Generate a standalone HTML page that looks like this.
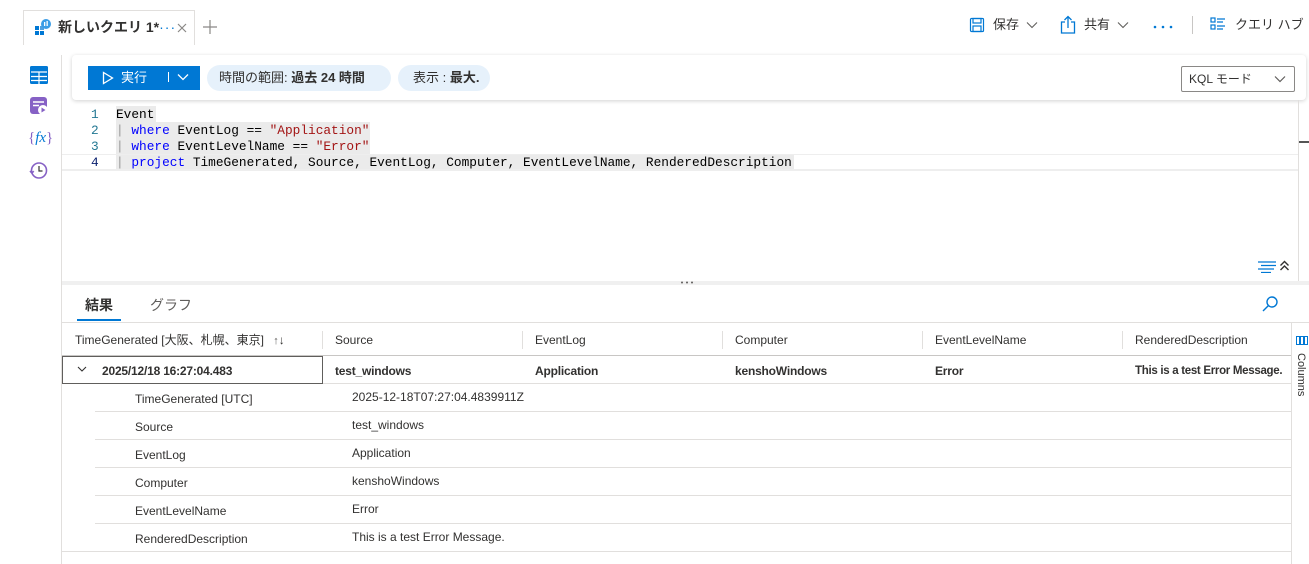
<!DOCTYPE html>
<html><head><meta charset="utf-8"><style>
*{margin:0;padding:0;box-sizing:border-box}
body{width:1309px;height:564px;overflow:hidden;background:#fff;font-family:"Liberation Sans","Noto Sans CJK JP",sans-serif;color:#323130;position:relative;font-size:12px}
.a{position:absolute;white-space:nowrap;line-height:16px}
.mono{font-family:"Liberation Mono","DejaVu Sans Mono",monospace;font-size:12.8px}
.kw{color:#0000ff}.st{color:#a31515}
</style></head><body>
<!-- tab bar -->
<div class="a" style="left:23px;top:10px;width:172px;height:35px;border:1px solid #e1dfdd;border-bottom:none;background:#fff"></div>
<svg class="a" style="left:34px;top:18px" width="18" height="18" viewBox="0 0 18 18"><rect x="1" y="8" width="4" height="4" fill="#0078d4"/><rect x="6" y="8" width="4" height="4" fill="#50a0e0"/><rect x="1" y="13" width="4" height="4" fill="#0078d4"/><rect x="6" y="13" width="4" height="4" fill="#0078d4"/><circle cx="12" cy="6" r="5" fill="#3b9de6"/><rect x="10" y="4" width="1.3" height="4" fill="#fff"/><rect x="12.5" y="3" width="1.3" height="5" fill="#fff"/></svg>
<div class="a" style="left:58px;top:19px;font-size:14px;font-weight:bold;color:#323130">新しいクエリ 1*<span style="color:#0078d4;font-weight:normal;letter-spacing:1px">···</span></div>
<svg class="a" style="left:177px;top:23px" width="10" height="10" viewBox="0 0 10 10" stroke="#8a8886" stroke-width="1.2"><path d="M1 1l8 8M9 1l-8 8"/></svg>
<svg class="a" style="left:203px;top:20px" width="14" height="14" viewBox="0 0 14 14" stroke="#8a8886" stroke-width="1.2"><path d="M7 0v14M0 7h14"/></svg>
<svg class="a" style="left:969px;top:17px" width="16" height="16" viewBox="0 0 16 16" fill="none" stroke="#0078d4" stroke-width="1.2"><rect x="1.5" y="1.5" width="13" height="13" rx="1"/><rect x="4" y="1.5" width="8" height="4.5"/><rect x="4" y="9" width="8" height="5.5"/></svg>
<div class="a" style="left:993px;top:17px;font-size:13px">保存</div>
<svg class="a" style="left:1026px;top:21px" width="12" height="8" viewBox="0 0 12 8" fill="none" stroke="#605e5c" stroke-width="1.1"><path d="M1 1.5l5 5 5-5"/></svg>
<svg class="a" style="left:1060px;top:15px" width="16" height="19" viewBox="0 0 16 19" fill="none" stroke="#0078d4" stroke-width="1.3"><path d="M5 7H1.5v11h13V7H11"/><path d="M8 13V1.5M4.5 5L8 1.5 11.5 5"/></svg>
<div class="a" style="left:1084px;top:17px;font-size:13px">共有</div>
<svg class="a" style="left:1117px;top:21px" width="12" height="8" viewBox="0 0 12 8" fill="none" stroke="#605e5c" stroke-width="1.1"><path d="M1 1.5l5 5 5-5"/></svg>
<svg class="a" style="left:1153px;top:25px" width="20" height="4" viewBox="0 0 20 4" fill="#0078d4"><circle cx="2" cy="2" r="1.3"/><circle cx="10" cy="2" r="1.3"/><circle cx="18" cy="2" r="1.3"/></svg>
<div class="a" style="left:1192px;top:16px;width:1px;height:18px;background:#c8c6c4"></div>
<svg class="a" style="left:1210px;top:17px" width="16" height="14" viewBox="0 0 16 14" fill="none" stroke="#0078d4" stroke-width="1.2"><rect x="1" y="1" width="4" height="4"/><rect x="1" y="8" width="4" height="4"/><path d="M7 2h8M7 5h6M7 9h8M7 12h6"/></svg>
<div class="a" style="left:1235px;top:17px;font-size:13px">クエリ ハブ</div>
<!-- left sidebar -->
<div class="a" style="left:61px;top:55px;width:1px;height:509px;background:#e1dfdd"></div>
<svg class="a" style="left:30px;top:66px" width="18" height="18" viewBox="0 0 18 18"><rect x="0" y="0" width="18" height="18" rx="1.5" fill="#0078d4"/><path d="M1 6h16M1 10.5h16M1 14.5h16M9 6v12" stroke="#fff" stroke-width="1.2"/></svg>
<svg class="a" style="left:30px;top:97px" width="18" height="19" viewBox="0 0 18 19"><rect x="0" y="0" width="17" height="17" rx="3" fill="#8661c5"/><path d="M3 5h11M3 8.5h6" stroke="#fff" stroke-width="1.5"/><circle cx="13" cy="13" r="5" fill="#fff"/><path d="M11.5 10.5v5l4-2.5z" fill="#8661c5"/></svg>
<div class="a" style="left:28px;top:130px;font-size:15px;color:#0078d4;font-family:'Liberation Serif',serif"><span style="color:#8661c5">{</span><i>fx</i><span style="color:#8661c5">}</span></div>
<svg class="a" style="left:29px;top:161px" width="20" height="19" viewBox="0 0 20 19" fill="none" stroke="#8661c5" stroke-width="1.6"><circle cx="10" cy="9.5" r="7.5"/><path d="M10 5v5h3.5" stroke="#333" stroke-width="1.2"/><path d="M1 10l1.8 2 2-1.8"/></svg>
<!-- toolbar card -->
<div class="a" style="left:72px;top:55px;width:1234px;height:45px;background:#fff;border-radius:4px;box-shadow:0 1px 4px rgba(0,0,0,.18)"></div>
<div class="a" style="left:88px;top:66px;width:112px;height:24px;background:#0078d4"></div>
<svg class="a" style="left:102px;top:71px" width="12" height="14" viewBox="0 0 12 14" fill="none" stroke="#fff" stroke-width="1.3"><path d="M1.5 1.5v11l9-5.5z"/></svg>
<div class="a" style="left:121px;top:70px;color:#fff;font-size:13px">実行</div>
<div class="a" style="left:168px;top:72px;width:1px;height:10px;background:#fff"></div>
<svg class="a" style="left:177px;top:73px" width="12" height="8" viewBox="0 0 12 8" fill="none" stroke="#fff" stroke-width="1.3"><path d="M1 1.5l5 5 5-5"/></svg>
<div class="a" style="left:207px;top:65px;width:184px;height:26px;border-radius:13px;background:#e6f1fb"></div>
<div class="a" style="left:219px;top:70px;font-size:13px">時間の範囲: <b>過去 24 時間</b></div>
<div class="a" style="left:398px;top:65px;width:92px;height:26px;border-radius:13px;background:#e6f1fb"></div>
<div class="a" style="left:413px;top:70px;font-size:13px">表示 : <b>最大.</b></div>
<div class="a" style="left:1181px;top:66px;width:114px;height:26px;border:1px solid #8a8886;border-radius:2px"></div>
<div class="a" style="left:1189px;top:71px;font-size:12px">KQL モード</div>
<svg class="a" style="left:1274px;top:75px" width="12" height="8" viewBox="0 0 12 8" fill="none" stroke="#605e5c" stroke-width="1.2"><path d="M1 1.5l5 5 5-5"/></svg>
<!-- editor -->
<div class="a" style="left:116px;top:106px;width:40px;height:16px;background:#ebebeb"></div>
<div class="a" style="left:116px;top:122px;width:254px;height:16px;background:#ebebeb"></div>
<div class="a" style="left:116px;top:138px;width:254px;height:16px;background:#ebebeb"></div>
<div class="a" style="left:116px;top:154px;width:678px;height:16px;background:#ebebeb"></div>
<div class="a" style="left:62px;top:154px;width:1236px;height:17px;border-top:1px solid #eee;border-bottom:2px solid #eee"></div>
<div class="a mono" style="left:91px;top:107px;line-height:16px;color:#237893">1<br>2<br>3<br><span style="color:#0b216f">4</span></div>
<div class="a mono" style="left:116px;top:107px;line-height:16px;color:#000">Event<br><span style="color:#999">|</span> <span class="kw">where</span> EventLog == <span class="st">"Application"</span><br><span style="color:#999">|</span> <span class="kw">where</span> EventLevelName == <span class="st">"Error"</span><br><span style="color:#999">|</span> <span class="kw">project</span> TimeGenerated, Source, EventLog, Computer, EventLevelName, RenderedDescription</div>
<div class="a" style="left:1298px;top:100px;width:1px;height:181px;background:#e1dfdd"></div>
<div class="a" style="left:1299px;top:141px;width:10px;height:2px;background:#555"></div>
<svg class="a" style="left:1258px;top:261px" width="18" height="12" viewBox="0 0 18 12" stroke="#0078d4" stroke-width="1.2"><path d="M0 1h18M3 4.5h15M0 8h16M3 11.5h10"/></svg>
<svg class="a" style="left:1279px;top:260px" width="11" height="11" viewBox="0 0 11 11" fill="none" stroke="#323130" stroke-width="1.4"><path d="M1.5 5.5l4-4 4 4M1.5 10l4-4 4 4"/></svg>
<!-- splitter -->
<div class="a" style="left:62px;top:281px;width:1247px;height:4px;background:#f0f0f0"></div>
<svg class="a" style="left:680px;top:281px" width="14" height="3" viewBox="0 0 14 3" fill="#605e5c"><circle cx="2" cy="1.5" r="1"/><circle cx="7" cy="1.5" r="1"/><circle cx="12" cy="1.5" r="1"/></svg>
<!-- results tabs -->
<div class="a" style="left:85px;top:297px;font-size:14px;font-weight:bold">結果</div>
<div class="a" style="left:150px;top:297px;font-size:14px;color:#605e5c">グラフ</div>
<div class="a" style="left:77px;top:319px;width:44px;height:2px;background:#0078d4"></div>
<div class="a" style="left:62px;top:322px;width:1247px;height:1px;background:#e1dfdd"></div>
<svg class="a" style="left:1261px;top:295px" width="18" height="18" viewBox="0 0 18 18" fill="none" stroke="#0078d4" stroke-width="1.4"><circle cx="11" cy="7" r="5"/><path d="M7.5 10.5L2 16"/></svg>
<!-- header -->
<div class="a" style="left:75px;top:332px;font-size:12px">TimeGenerated [大阪、札幌、東京] <span style="color:#605e5c;font-size:11px;margin-left:6px">↑</span>↓</div>
<div class="a" style="left:322px;top:331px;width:1px;height:18px;background:#e1dfdd"></div>
<div class="a" style="left:522px;top:331px;width:1px;height:18px;background:#e1dfdd"></div>
<div class="a" style="left:722px;top:331px;width:1px;height:18px;background:#e1dfdd"></div>
<div class="a" style="left:922px;top:331px;width:1px;height:18px;background:#e1dfdd"></div>
<div class="a" style="left:1122px;top:331px;width:1px;height:18px;background:#e1dfdd"></div>
<div class="a" style="left:335px;top:332px">Source</div>
<div class="a" style="left:535px;top:332px">EventLog</div>
<div class="a" style="left:735px;top:332px">Computer</div>
<div class="a" style="left:935px;top:332px">EventLevelName</div>
<div class="a" style="left:1135px;top:332px">RenderedDescription</div>
<div class="a" style="left:62px;top:355px;width:1229px;height:1px;background:#c8c6c4"></div>
<!-- columns side -->
<div class="a" style="left:1291px;top:323px;width:1px;height:241px;background:#e1dfdd"></div>
<svg class="a" style="left:1296px;top:336px" width="12" height="9" viewBox="0 0 12 9" fill="none" stroke="#0078d4" stroke-width="1"><rect x=".5" y=".5" width="3" height="8"/><rect x="4.5" y=".5" width="3" height="8"/><rect x="8.5" y=".5" width="3" height="8"/></svg>
<div class="a" style="left:1293px;top:353px;font-size:11px;writing-mode:vertical-rl">Columns</div>
<!-- data row -->
<div class="a" style="left:62px;top:356px;width:261px;height:28px;border:1px solid #605e5c"></div>
<svg class="a" style="left:77px;top:366px" width="10" height="7" viewBox="0 0 10 7" fill="none" stroke="#323130" stroke-width="1.1"><path d="M1 1l4 4 4-4"/></svg>
<div class="a" style="left:102px;top:363px;font-weight:bold;letter-spacing:-0.2px">2025/12/18 16:27:04.483</div>
<div class="a" style="left:335px;top:363px;font-weight:bold;letter-spacing:-0.2px">test_windows</div>
<div class="a" style="left:535px;top:363px;font-weight:bold;letter-spacing:-0.2px">Application</div>
<div class="a" style="left:735px;top:363px;font-weight:bold;letter-spacing:-0.2px">kenshoWindows</div>
<div class="a" style="left:935px;top:363px;font-weight:bold;letter-spacing:-0.2px">Error</div>
<div class="a" style="left:1135px;top:363px;font-weight:bold;font-size:11.5px;letter-spacing:-0.3px">This is a test Error Message.</div>
<div class="a" style="left:323px;top:383px;width:968px;height:1px;background:#e1dfdd"></div>
<!-- details -->
<div class="a" style="left:95px;top:411px;width:1196px;height:1px;background:#e1dfdd"></div>
<div class="a" style="left:95px;top:439px;width:1196px;height:1px;background:#e1dfdd"></div>
<div class="a" style="left:95px;top:467px;width:1196px;height:1px;background:#e1dfdd"></div>
<div class="a" style="left:95px;top:495px;width:1196px;height:1px;background:#e1dfdd"></div>
<div class="a" style="left:95px;top:523px;width:1196px;height:1px;background:#e1dfdd"></div>
<div class="a" style="left:62px;top:551px;width:1229px;height:1px;background:#e1dfdd"></div>
<div class="a" style="left:135px;top:391px">TimeGenerated [UTC]</div><div class="a" style="left:352px;top:389px">2025-12-18T07:27:04.4839911Z</div>
<div class="a" style="left:135px;top:419px">Source</div><div class="a" style="left:352px;top:417px">test_windows</div>
<div class="a" style="left:135px;top:447px">EventLog</div><div class="a" style="left:352px;top:445px">Application</div>
<div class="a" style="left:135px;top:475px">Computer</div><div class="a" style="left:352px;top:473px">kenshoWindows</div>
<div class="a" style="left:135px;top:503px">EventLevelName</div><div class="a" style="left:352px;top:501px">Error</div>
<div class="a" style="left:135px;top:531px">RenderedDescription</div><div class="a" style="left:352px;top:529px">This is a test Error Message.</div>
</body></html>
